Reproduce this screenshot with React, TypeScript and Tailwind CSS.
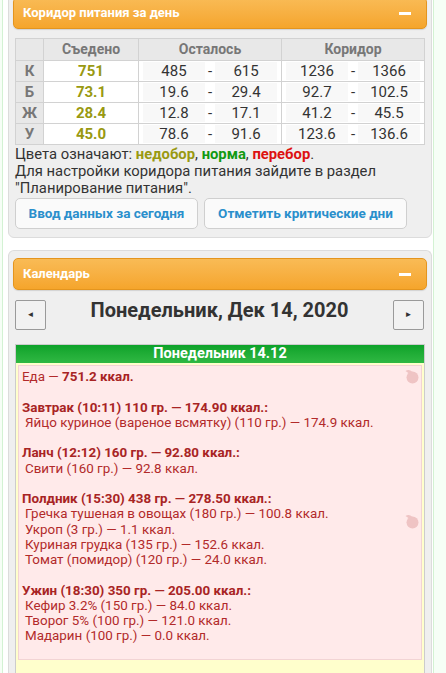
import React from "react";

const rows = [
  { k: "К", eaten: "751", left: ["485", "615"], corr: ["1236", "1366"] },
  { k: "Б", eaten: "73.1", left: ["19.6", "29.4"], corr: ["92.7", "102.5"] },
  { k: "Ж", eaten: "28.4", left: ["12.8", "17.1"], corr: ["41.2", "45.5"] },
  { k: "У", eaten: "45.0", left: ["78.6", "91.6"], corr: ["123.6", "136.6"] },
];

const meals = [
  {
    title: "Завтрак (10:11) 110 гр. — 174.90 ккал.:",
    items: ["Яйцо куриное (вареное всмятку) (110 гр.) — 174.9 ккал."],
  },
  {
    title: "Ланч (12:12) 160 гр. — 92.80 ккал.:",
    items: ["Свити (160 гр.) — 92.8 ккал."],
  },
  {
    title: "Полдник (15:30) 438 гр. — 278.50 ккал.:",
    items: [
      "Гречка тушеная в овощах (180 гр.) — 100.8 ккал.",
      "Укроп (3 гр.) — 1.1 ккал.",
      "Куриная грудка (135 гр.) — 152.6 ккал.",
      "Томат (помидор) (120 гр.) — 24.0 ккал.",
    ],
  },
  {
    title: "Ужин (18:30) 350 гр. — 205.00 ккал.:",
    items: [
      "Кефир 3.2% (150 гр.) — 84.0 ккал.",
      "Творог 5% (100 гр.) — 121.0 ккал.",
      "Мадарин (100 гр.) — 0.0 ккал.",
    ],
  },
];

function PanelHeader({ title }: { title: string }) {
  return (
    <div className="mx-[4px] flex h-[32px] items-center justify-between rounded-[5px] border border-[#e4951e] bg-gradient-to-b from-[#f9bb55] to-[#f5a52b] pl-[9px] pr-[15px] shadow-[0_1px_1px_rgba(0,0,0,0.12)]">
      <span className="text-[13px] font-bold text-white">{title}</span>
      <span className="block h-[3px] w-[12px] bg-white" />
    </div>
  );
}

function Range({ pair }: { pair: string[] }) {
  return (
    <div className="grid grid-cols-[1fr_auto_1fr] items-center">
      <span className="bg-[#f8f8f8] text-center">{pair[0]}</span>
      <span className="px-[3px] text-center">-</span>
      <span className="bg-[#f8f8f8] text-center">{pair[1]}</span>
    </div>
  );
}

// faded apple mark in the day log
function Blob({ top }: { top: number }) {
  return (
    <svg
      className="absolute right-[2px]"
      style={{ top }}
      width="14"
      height="15"
      viewBox="0 0 14 15"
    >
      <circle cx="7.5" cy="8.5" r="6" fill="#efc4c4" />
      <path d="M0.5 2 Q4 -0.5 7.5 3 L5.5 5.5 Z" fill="#efc4c4" />
    </svg>
  );
}

export default function App() {
  return (
    <div
      className="min-h-[673px] overflow-hidden bg-[#f6fef6] text-[#333]"
      style={{ fontFamily: "Roboto, 'Liberation Sans', sans-serif" }}
    >
      <div className="ml-[2px] min-h-[673px] w-[432px] border-x border-[#d3f2d3] bg-white pl-[5px] pr-[1px]">
        {/* Nutrition corridor */}
        <div className="-mt-[11px] rounded-[6px] border border-[#dcdcdc] bg-[#efefef] pb-[8px] pt-[7px]">
          <PanelHeader title="Коридор питания за день" />
          <div className="px-[6px] pt-[9px]">
            <table className="w-full border-collapse text-[15px]">
              <thead>
                <tr className="h-[21px] bg-[#e8e8e8] text-[14px] font-bold text-[#777]">
                  <th className="w-[28px] border border-[#d2d2d2]" />
                  <th className="w-[95px] border border-[#d2d2d2]">Съедено</th>
                  <th className="w-[143px] border border-[#d2d2d2]">Осталось</th>
                  <th className="border border-[#d2d2d2]">Коридор</th>
                </tr>
              </thead>
              <tbody>
                {rows.map((r) => (
                  <tr key={r.k} className="h-[21px] leading-[18px]">
                    <td className="border border-[#d2d2d2] bg-[#e8e8e8] text-center font-bold text-[#777]">
                      {r.k}
                    </td>
                    <td className="border border-[#d2d2d2] bg-white text-center font-bold text-[#999911]">
                      {r.eaten}
                    </td>
                    <td className="border border-[#d2d2d2] bg-white px-[4px]">
                      <Range pair={r.left} />
                    </td>
                    <td className="border border-[#d2d2d2] bg-white px-[4px]">
                      <Range pair={r.corr} />
                    </td>
                  </tr>
                ))}
              </tbody>
            </table>
            <div className="pt-[1px] text-[14.8px] leading-[17px] text-[#333]">
              <p>
                Цвета означают: <b className="text-[#999911]">недобор</b>,{" "}
                <b className="text-[#119911]">норма</b>,{" "}
                <b className="text-[#dd1111]">перебор</b>.
              </p>
              <p>Для настройки коридора питания зайдите в раздел "Планирование питания".</p>
            </div>
            <div className="mt-[1px] flex gap-[6px]">
              <button className="h-[31px] w-[183px] rounded-[5px] border border-[#cfcfcf] bg-[#fafafa] text-[13.5px] font-bold text-[#2a8fcc]">
                Ввод данных за сегодня
              </button>
              <button className="h-[31px] w-[203px] rounded-[5px] border border-[#cfcfcf] bg-[#fafafa] text-[13.5px] font-bold text-[#2a8fcc]">
                Отметить критические дни
              </button>
            </div>
          </div>
        </div>

        {/* Calendar */}
        <div className="mt-[12px] rounded-t-[6px] border border-b-0 border-[#dcdcdc] bg-[#efefef] pt-[7px]">
          <PanelHeader title="Календарь" />
          <div className="px-[6px] pt-[10px]">
            <div className="flex items-center justify-between">
              <button className="flex h-[30px] w-[31px] items-center justify-center rounded-[2px] border border-[#9a9a9a] bg-[#f2f2f2] text-[8px] text-[#333]">
                ◄
              </button>
              <span className="-mt-[10px] text-[20px] font-bold text-[#333]">
                Понедельник, Дек 14, 2020
              </span>
              <button className="mr-[1px] flex h-[30px] w-[31px] items-center justify-center rounded-[2px] border border-[#9a9a9a] bg-[#f2f2f2] text-[8px] text-[#333]">
                ►
              </button>
            </div>
            <div className="mt-[14px] border border-b-0 border-[#cccccc] bg-[#ffffcc] pb-[20px]">
              <div className="flex h-[18px] items-center justify-center bg-gradient-to-b from-[#0ba229] to-[#2fb843] text-[14.5px] font-bold text-white">
                Понедельник 14.12
              </div>
              <div className="relative mx-[2px] mt-[2px] border border-[#f2d4d4] bg-[#ffeaea] px-[3px] pt-[3px] text-[13.4px] leading-[15.25px] text-[#b22a2a]">
                <Blob top={3} />
                <Blob top={148} />
                <p>
                  Еда — <b className="text-[#a82424]">751.2 ккал.</b>
                </p>
                {meals.map((m) => (
                  <div key={m.title}>
                    <p>&nbsp;</p>
                    <p className="font-bold text-[#a82424]">{m.title}</p>
                    {m.items.map((it) => (
                      <p key={it} className="pl-[3px]">
                        {it}
                      </p>
                    ))}
                  </div>
                ))}
                <p>&nbsp;</p>
              </div>
            </div>
          </div>
        </div>
      </div>
    </div>
  );
}
